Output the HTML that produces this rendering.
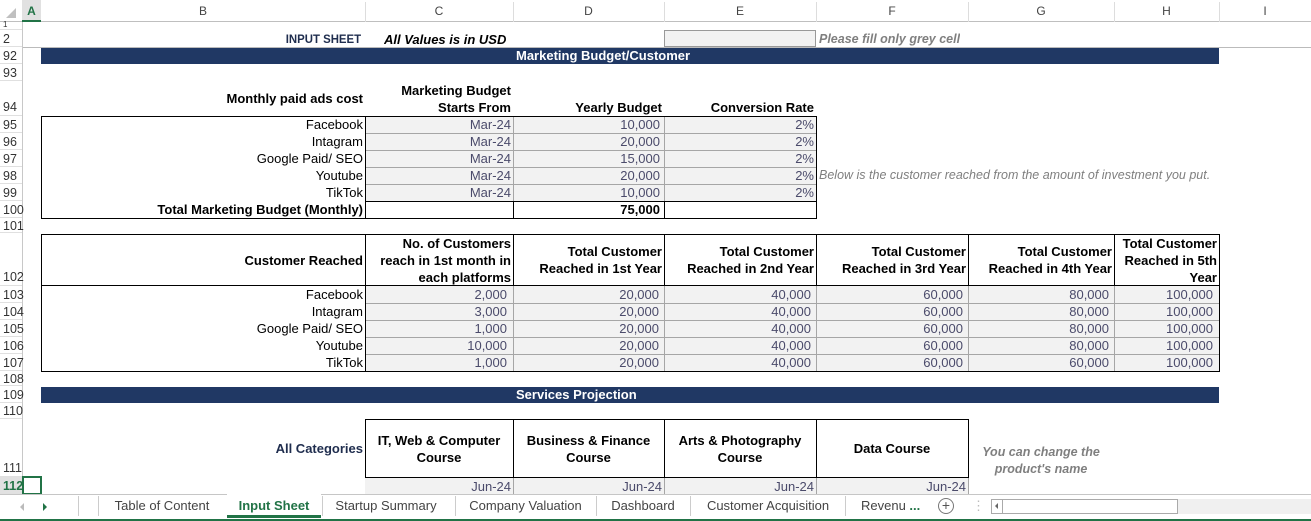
<!DOCTYPE html>
<html><head><meta charset="utf-8"><style>
*{margin:0;padding:0;box-sizing:border-box}
body{width:1311px;height:521px;overflow:hidden;background:#fff;font-family:"Liberation Sans",Arial,sans-serif;font-size:13px;color:#000;position:relative}
.a{position:absolute}
.t{position:absolute;white-space:nowrap;line-height:17px;overflow:hidden}
.r{text-align:right;padding-right:2px}
.c{text-align:center}
.b{font-weight:bold}
.rh{position:absolute;left:0;width:22px;font-size:12.5px;color:#333;padding-left:3px;border-bottom:1px solid #e0e0e0;line-height:15px}
.g{background:#f2f2f2}
.v{color:#4b4b6b}
.box{position:absolute;border:1px solid #000}
.gl{position:absolute;background:#a6a6a6}
.bl{position:absolute;background:#000}
</style></head><body>
<!-- column headers -->
<div class="a" style="left:0;top:0;width:1311px;height:22px;background:#fff;border-bottom:1px solid #bfbfbf"></div>
<div class="a" style="left:22px;top:0;width:19px;height:22px;background:#e1e1e1;border-bottom:2px solid #217346"></div>
<div class="t" style="left:22px;top:3px;width:19px;text-align:center;color:#217346;font-weight:bold;font-size:12px">A</div>
<div class="a" style="left:6px;top:8px;width:0;height:0;border-left:10px solid transparent;border-bottom:10px solid #c0c0c0"></div>
<div class="t c" style="left:41px;top:3px;width:324px;font-size:12px;color:#444">B</div>
<div class="t c" style="left:365px;top:3px;width:148px;font-size:12px;color:#444">C</div>
<div class="t c" style="left:513px;top:3px;width:151px;font-size:12px;color:#444">D</div>
<div class="t c" style="left:664px;top:3px;width:152px;font-size:12px;color:#444">E</div>
<div class="t c" style="left:816px;top:3px;width:152px;font-size:12px;color:#444">F</div>
<div class="t c" style="left:968px;top:3px;width:146px;font-size:12px;color:#444">G</div>
<div class="t c" style="left:1114px;top:3px;width:105px;font-size:12px;color:#444">H</div>
<div class="t c" style="left:1219px;top:3px;width:92px;font-size:12px;color:#444">I</div>
<div class="a" style="left:365px;top:2px;width:1px;height:20px;background:#ddd"></div>
<div class="a" style="left:513px;top:2px;width:1px;height:20px;background:#ddd"></div>
<div class="a" style="left:664px;top:2px;width:1px;height:20px;background:#ddd"></div>
<div class="a" style="left:816px;top:2px;width:1px;height:20px;background:#ddd"></div>
<div class="a" style="left:968px;top:2px;width:1px;height:20px;background:#ddd"></div>
<div class="a" style="left:1114px;top:2px;width:1px;height:20px;background:#ddd"></div>
<div class="a" style="left:1219px;top:2px;width:1px;height:20px;background:#ddd"></div>
<!-- row header column -->
<div class="a" style="left:22px;top:22px;width:1px;height:472px;background:#c8c8c8"></div>
<div class="rh" style="top:22px;height:8px;font-size:8px;line-height:6px">1</div>
<div class="rh" style="top:30px;height:17px;padding-top:2px">2</div>
<div class="rh" style="top:47px;height:17px;padding-top:2px">92</div>
<div class="rh" style="top:64px;height:17px;padding-top:2px">93</div>
<div class="rh" style="top:81px;height:35px;padding-top:19px">94</div>
<div class="rh" style="top:116px;height:17px;padding-top:2px">95</div>
<div class="rh" style="top:133px;height:17px;padding-top:2px">96</div>
<div class="rh" style="top:150px;height:17px;padding-top:2px">97</div>
<div class="rh" style="top:167px;height:17px;padding-top:2px">98</div>
<div class="rh" style="top:184px;height:17px;padding-top:2px">99</div>
<div class="rh" style="top:201px;height:17px;padding-top:2px">100</div>
<div class="rh" style="top:218px;height:15px;padding-top:1px">101</div>
<div class="rh" style="top:233px;height:53px;padding-top:37px">102</div>
<div class="rh" style="top:286px;height:17px;padding-top:2px">103</div>
<div class="rh" style="top:303px;height:17px;padding-top:2px">104</div>
<div class="rh" style="top:320px;height:17px;padding-top:2px">105</div>
<div class="rh" style="top:337px;height:17px;padding-top:2px">106</div>
<div class="rh" style="top:354px;height:17px;padding-top:2px">107</div>
<div class="rh" style="top:371px;height:15px;padding-top:1px">108</div>
<div class="rh" style="top:386px;height:17px;padding-top:2px">109</div>
<div class="rh" style="top:403px;height:16px;padding-top:1px">110</div>
<div class="rh" style="top:419px;height:58px;padding-top:42px">111</div>
<div class="rh" style="top:477px;height:17px;padding-top:2px;background:#e1e1e1;color:#217346;font-weight:bold">112</div>

<!-- row 2 -->
<div class="a" style="left:23px;top:47px;width:1288px;height:1px;background:#bbb"></div>
<div class="t b r" style="left:41px;top:31px;width:322px;color:#1f2d4e;font-size:12px;transform:scaleX(.95);transform-origin:right">INPUT SHEET</div>
<div class="t b" style="left:384px;top:31px;font-style:italic">All Values is in USD</div>
<div class="a g" style="left:664px;top:30px;width:152px;height:17px;border:1px solid #999"></div>
<div class="t b" style="left:819px;top:31px;font-style:italic;color:#7f7f7f;font-size:12.5px">Please fill only grey cell</div>
<!-- 92 band -->
<div class="a" style="left:41px;top:48px;width:1178px;height:16px;background:#203864"></div>
<div class="t b" style="left:516px;top:47px;color:#fff">Marketing Budget/Customer</div>
<!-- 94 headers -->
<div class="t b r" style="left:41px;top:90px;width:324px">Monthly paid ads cost</div>
<div class="t b r" style="left:365px;top:82px;width:148px">Marketing Budget</div>
<div class="t b r" style="left:365px;top:99px;width:148px">Starts From</div>
<div class="t b r" style="left:513px;top:99px;width:151px">Yearly Budget</div>
<div class="t b r" style="left:664px;top:99px;width:152px">Conversion Rate</div>
<!-- table 1 -->
<div class="a g" style="left:365px;top:116px;width:451px;height:85px"></div>
<div class="gl" style="left:365px;top:133px;width:451px;height:1px"></div>
<div class="gl" style="left:365px;top:150px;width:451px;height:1px"></div>
<div class="gl" style="left:365px;top:167px;width:451px;height:1px"></div>
<div class="gl" style="left:365px;top:184px;width:451px;height:1px"></div>
<div class="gl" style="left:513px;top:116px;width:1px;height:85px"></div>
<div class="gl" style="left:664px;top:116px;width:1px;height:85px"></div>
<div class="box" style="left:41px;top:116px;width:776px;height:103px"></div>
<div class="bl" style="left:365px;top:116px;width:1px;height:102px"></div>
<div class="bl" style="left:365px;top:201px;width:451px;height:1px"></div>
<div class="bl" style="left:513px;top:201px;width:1px;height:17px"></div>
<div class="bl" style="left:664px;top:201px;width:1px;height:17px"></div>
<div class="t r" style="left:41px;top:116px;width:324px">Facebook</div>
<div class="t r" style="left:41px;top:133px;width:324px">Intagram</div>
<div class="t r" style="left:41px;top:150px;width:324px">Google Paid/ SEO</div>
<div class="t r" style="left:41px;top:167px;width:324px">Youtube</div>
<div class="t r" style="left:41px;top:184px;width:324px">TikTok</div>
<div class="t r b" style="left:41px;top:201px;width:324px">Total Marketing Budget (Monthly)</div>
<div class="t r v" style="left:365px;top:116px;width:148px">Mar-24</div>
<div class="t r v" style="left:365px;top:133px;width:148px">Mar-24</div>
<div class="t r v" style="left:365px;top:150px;width:148px">Mar-24</div>
<div class="t r v" style="left:365px;top:167px;width:148px">Mar-24</div>
<div class="t r v" style="left:365px;top:184px;width:148px">Mar-24</div>
<div class="t r v" style="left:513px;top:116px;width:151px;padding-right:4px">10,000</div>
<div class="t r v" style="left:513px;top:133px;width:151px;padding-right:4px">20,000</div>
<div class="t r v" style="left:513px;top:150px;width:151px;padding-right:4px">15,000</div>
<div class="t r v" style="left:513px;top:167px;width:151px;padding-right:4px">20,000</div>
<div class="t r v" style="left:513px;top:184px;width:151px;padding-right:4px">10,000</div>
<div class="t r b" style="left:513px;top:201px;width:151px;padding-right:4px">75,000</div>
<div class="t r v" style="left:664px;top:116px;width:152px">2%</div>
<div class="t r v" style="left:664px;top:133px;width:152px">2%</div>
<div class="t r v" style="left:664px;top:150px;width:152px">2%</div>
<div class="t r v" style="left:664px;top:167px;width:152px">2%</div>
<div class="t r v" style="left:664px;top:184px;width:152px">2%</div>
<div class="t" style="left:819px;top:167px;font-style:italic;color:#7f7f7f;font-size:12.5px">Below is the customer reached from the amount of investment you put.</div>

<!-- table 2 -->
<div class="a g" style="left:365px;top:286px;width:854px;height:85px"></div>
<div class="gl" style="left:365px;top:303px;width:854px;height:1px"></div>
<div class="gl" style="left:365px;top:320px;width:854px;height:1px"></div>
<div class="gl" style="left:365px;top:337px;width:854px;height:1px"></div>
<div class="gl" style="left:365px;top:354px;width:854px;height:1px"></div>
<div class="gl" style="left:513px;top:286px;width:1px;height:85px"></div>
<div class="gl" style="left:664px;top:286px;width:1px;height:85px"></div>
<div class="gl" style="left:816px;top:286px;width:1px;height:85px"></div>
<div class="gl" style="left:968px;top:286px;width:1px;height:85px"></div>
<div class="gl" style="left:1114px;top:286px;width:1px;height:85px"></div>
<div class="box" style="left:41px;top:234px;width:1179px;height:138px"></div>
<div class="bl" style="left:41px;top:285px;width:1178px;height:1px"></div>
<div class="bl" style="left:365px;top:234px;width:1px;height:137px"></div>
<div class="bl" style="left:513px;top:234px;width:1px;height:52px"></div>
<div class="bl" style="left:664px;top:234px;width:1px;height:52px"></div>
<div class="bl" style="left:816px;top:234px;width:1px;height:52px"></div>
<div class="bl" style="left:968px;top:234px;width:1px;height:52px"></div>
<div class="bl" style="left:1114px;top:234px;width:1px;height:52px"></div>
<div class="t b r" style="left:41px;top:252px;width:324px">Customer Reached</div>
<div class="t b r" style="left:365px;top:235px;width:148px">No. of Customers</div>
<div class="t b r" style="left:365px;top:252px;width:148px">reach in 1st month in</div>
<div class="t b r" style="left:365px;top:269px;width:148px">each platforms</div>
<div class="t b r" style="left:513px;top:243px;width:151px">Total Customer</div>
<div class="t b r" style="left:513px;top:260px;width:151px">Reached in 1st Year</div>
<div class="t b r" style="left:664px;top:243px;width:152px">Total Customer</div>
<div class="t b r" style="left:664px;top:260px;width:152px">Reached in 2nd Year</div>
<div class="t b r" style="left:816px;top:243px;width:152px">Total Customer</div>
<div class="t b r" style="left:816px;top:260px;width:152px">Reached in 3rd Year</div>
<div class="t b r" style="left:968px;top:243px;width:146px">Total Customer</div>
<div class="t b r" style="left:968px;top:260px;width:146px">Reached in 4th Year</div>
<div class="t b r" style="left:1114px;top:235px;width:105px">Total Customer</div>
<div class="t b r" style="left:1114px;top:252px;width:105px">Reached in 5th</div>
<div class="t b r" style="left:1114px;top:269px;width:105px">Year</div>

<div class="t r" style="left:41px;top:286px;width:324px">Facebook</div>
<div class="t r" style="left:41px;top:303px;width:324px">Intagram</div>
<div class="t r" style="left:41px;top:320px;width:324px">Google Paid/ SEO</div>
<div class="t r" style="left:41px;top:337px;width:324px">Youtube</div>
<div class="t r" style="left:41px;top:354px;width:324px">TikTok</div>

<div class="t r v" style="left:365px;top:286px;width:148px;padding-right:6px">2,000</div>
<div class="t r v" style="left:365px;top:303px;width:148px;padding-right:6px">3,000</div>
<div class="t r v" style="left:365px;top:320px;width:148px;padding-right:6px">1,000</div>
<div class="t r v" style="left:365px;top:337px;width:148px;padding-right:6px">10,000</div>
<div class="t r v" style="left:365px;top:354px;width:148px;padding-right:6px">1,000</div>
<div class="t r v" style="left:513px;top:286px;width:151px;padding-right:5px">20,000<br>20,000<br>20,000<br>20,000<br>20,000</div>
<div class="t r v" style="left:664px;top:286px;width:152px;padding-right:5px">40,000<br>40,000<br>40,000<br>40,000<br>40,000</div>
<div class="t r v" style="left:816px;top:286px;width:152px;padding-right:5px">60,000<br>60,000<br>60,000<br>60,000<br>60,000</div>
<div class="t r v" style="left:968px;top:286px;width:146px;padding-right:5px">80,000<br>80,000<br>80,000<br>80,000<br>60,000</div>
<div class="t r v" style="left:1114px;top:286px;width:105px;padding-right:6px">100,000<br>100,000<br>100,000<br>100,000<br>100,000</div>

<!-- 109 band -->
<div class="a" style="left:41px;top:387px;width:1178px;height:16px;background:#203864"></div>
<div class="t b" style="left:516px;top:386px;color:#fff">Services Projection</div>

<!-- table 3 -->
<div class="t b r" style="left:41px;top:440px;width:324px;color:#1f2d4e">All Categories</div>
<div class="a g" style="left:365px;top:477px;width:603px;height:17px"></div>
<div class="gl" style="left:513px;top:477px;width:1px;height:17px"></div>
<div class="gl" style="left:664px;top:477px;width:1px;height:17px"></div>
<div class="gl" style="left:816px;top:477px;width:1px;height:17px"></div>
<div class="gl" style="left:968px;top:477px;width:1px;height:17px"></div>
<div class="box" style="left:365px;top:419px;width:604px;height:59px"></div>
<div class="bl" style="left:513px;top:419px;width:1px;height:58px"></div>
<div class="bl" style="left:664px;top:419px;width:1px;height:58px"></div>
<div class="bl" style="left:816px;top:419px;width:1px;height:58px"></div>
<div class="t b c" style="left:365px;top:432px;width:148px">IT, Web &amp; Computer<br>Course</div>
<div class="t b c" style="left:513px;top:432px;width:151px">Business &amp; Finance<br>Course</div>
<div class="t b c" style="left:664px;top:432px;width:152px">Arts &amp; Photography<br>Course</div>
<div class="t b c" style="left:816px;top:440px;width:152px">Data Course</div>
<div class="t b c" style="left:968px;top:444px;width:146px;font-style:italic;color:#7f7f7f;font-size:12.5px">You can change the<br>product's name</div>
<div class="t r v" style="left:365px;top:478px;width:148px">Jun-24</div>
<div class="t r v" style="left:513px;top:478px;width:151px">Jun-24</div>
<div class="t r v" style="left:664px;top:478px;width:152px">Jun-24</div>
<div class="t r v" style="left:816px;top:478px;width:152px">Jun-24</div>
<div class="a" style="left:22px;top:476px;width:20px;height:19px;border:2px solid #217346"></div>

<!-- tab bar -->
<div class="a" style="left:0;top:494px;width:1311px;height:27px;background:#fff;border-top:1px solid #c6c6c6;border-bottom:2px solid #217346"></div>
<div class="a" style="left:20px;top:503px;width:0;height:0;border-top:4px solid transparent;border-bottom:4px solid transparent;border-right:4px solid #bbb"></div>
<div class="a" style="left:43px;top:503px;width:0;height:0;border-top:4px solid transparent;border-bottom:4px solid transparent;border-left:4px solid #217346"></div>
<div class="a" style="left:78px;top:496px;width:1px;height:20px;background:#ccc"></div>
<div class="t c" style="left:99px;top:497px;width:126px;color:#444">Table of Content</div>
<div class="a" style="left:179px;top:494px;width:76px;height:24px;background:#fff;border-bottom:3px solid #217346;left:227px;width:94px"></div>
<div class="t c b" style="left:227px;top:497px;width:94px;color:#217346">Input Sheet</div>
<div class="t c" style="left:322px;top:497px;width:128px;color:#444">Startup Summary</div>
<div class="a" style="left:455px;top:496px;width:1px;height:20px;background:#ccc"></div>
<div class="t c" style="left:456px;top:497px;width:139px;color:#444">Company Valuation</div>
<div class="a" style="left:596px;top:496px;width:1px;height:20px;background:#ccc"></div>
<div class="t c" style="left:597px;top:497px;width:92px;color:#444">Dashboard</div>
<div class="a" style="left:690px;top:496px;width:1px;height:20px;background:#ccc"></div>
<div class="t c" style="left:691px;top:497px;width:154px;color:#444">Customer Acquisition</div>
<div class="a" style="left:845px;top:496px;width:1px;height:20px;background:#ccc"></div>
<div class="t" style="left:861px;top:497px;color:#444">Revenu<span style="color:#217346;font-weight:bold">&nbsp;...</span></div>
<div class="a" style="left:938px;top:498px;width:16px;height:16px;border:1px solid #777;border-radius:50%;text-align:center;line-height:13px;font-size:14px;color:#555">+</div>
<div class="t" style="left:972px;top:497px;color:#bbb">⋮</div>
<div class="a" style="left:991px;top:499px;width:187px;height:15px;border:1px solid #aaa;background:#fff"></div>
<div class="a" style="left:995px;top:503px;width:0;height:0;border-top:3px solid transparent;border-bottom:3px solid transparent;border-right:3px solid #666"></div>
<div class="a" style="left:1002px;top:500px;width:1px;height:13px;background:#aaa"></div>
<div class="a" style="left:1178px;top:499px;width:133px;height:15px;background:#f0f0f0"></div>
<div class="a" style="left:1,0px;top:519px"></div>
<div class="a" style="left:0;top:494px;width:99px;height:1px"></div>
<div class="a" style="left:98px;top:496px;width:1px;height:20px;background:#ccc"></div>
<div class="a" style="left:322px;top:496px;width:1px;height:20px;background:#ccc"></div>
</body></html>
